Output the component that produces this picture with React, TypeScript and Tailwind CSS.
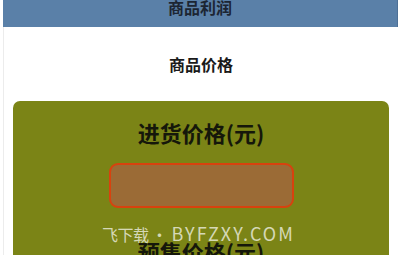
import React from "react";

export default function App() {
  const cjk = { fontFamily: '"Noto Sans CJK SC", "Noto Sans", sans-serif' };
  return (
    <div className="relative w-[398px] h-[255px] overflow-hidden bg-white" style={cjk}>
      <div className="ml-[3px] h-[27px] bg-[#5a80a8] flex justify-center border-r border-[#4d7096]">
        <span className="text-[16px] leading-[16px] font-bold text-[#1c2533] -mt-[1px]">商品利润</span>
      </div>
      <div className="ml-[3px] border-l border-[#ececec] h-[228px]">
        <div className="h-[74px] flex items-center justify-center">
          <span className="text-[16px] leading-[20px] font-bold text-[#1a1a1a]">商品价格</span>
        </div>
        <div className="ml-[9px] mr-[9px] rounded-[7px] bg-[#7b8416] flex flex-col items-center pt-[16px] h-[200px]">
          <div className="text-[22px] leading-[30px] font-bold text-[#15170a]">进货价格(元)</div>
          <div className="mt-[16px] w-[185px] h-[45px] rounded-[9px] border-[2.5px] border-[#d8420e] bg-[#9b6b36]" />
          <div className="mt-[28px] text-[22px] leading-[30px] font-bold text-[#15170a]">预售价格(元)</div>
        </div>
      </div>
      <div className="absolute left-[102px] top-[222px] flex items-baseline text-white/70 font-normal">
        <span className="text-[16px] leading-[22px] tracking-[-0.5px]">飞下载</span>
        <span className="text-[16px] leading-[22px] ml-[3px] mr-[4px]">•</span>
        <span className="text-[18px] leading-[22px] tracking-[2px]">BYFZXY.COM</span>
      </div>
    </div>
  );
}
